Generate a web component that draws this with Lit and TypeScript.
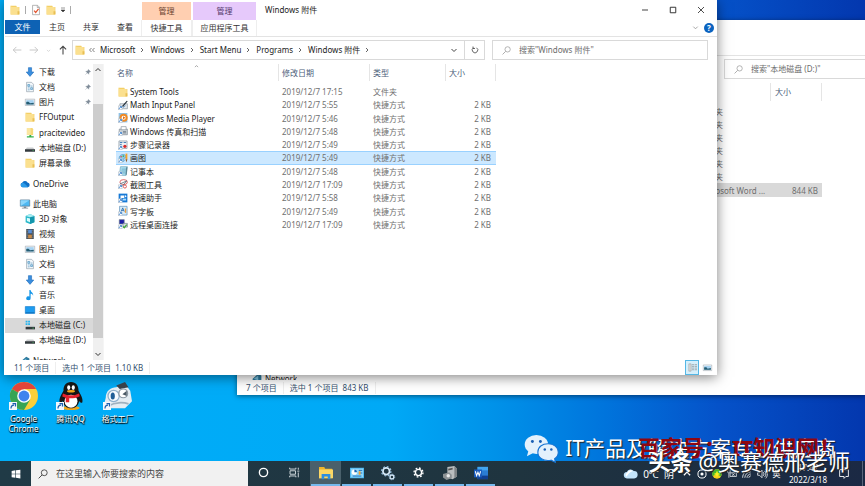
import { LitElement, html, svg, css, nothing, TemplateResult } from "lit";
import { customElement, property } from "lit/decorators.js";
import { classMap } from "lit/directives/class-map.js";

const shortcut = svg`<rect x="0.5" y="9.5" width="6" height="6" fill="#fff" stroke="#b9c4d0"/><path d="M2 14.5c0-2 1-3 3-3M3.400 10.500h2.300v2.300" stroke="#1668c4" fill="none" stroke-width="1.200"/>`;

const shapes: Record<string, unknown> = {
  folder: svg`<path d="M1 1h9l1 2h4v12H1z" fill="#f3cf66"/><path d="M2 3h12v12H1V1h1z" fill="#fbe08f"/><path d="M12 10h3v5h-3z" fill="#e8bf54"/>`,
  sharedFolder: svg`<path d="M3 0h9l1 2v9H3z" fill="#f7d877"/><path d="M3 0h6v11H3z" fill="#fbe6a0"/><path d="M7 11h3v2h4v2H3v-2h4z" fill="#35b04a"/>`,
  check: svg`<path d="M2.500.500h8l3 3v12h-11z" fill="#fff" stroke="#8a8a8a"/><path d="M10 1v3h3" stroke="#8a8a8a" fill="none"/><path d="M5 9l2.500 3L12 6" stroke="#e2532c" stroke-width="2" fill="none"/>`,
  download: svg`<path d="M5.500 1h5v7H14l-6 7-6-7h3.500z" fill="#3b8ede" stroke="#2470bd"/>`,
  doc: svg`<path d="M2.500.500h8l3 3v12h-11z" fill="#f4f8fb" stroke="#8d9aa6"/><path d="M4.500 4h3v3h-3zM9 6.500h3M4.500 9.500h3M9 9h3v3H9zM4.500 12.500h3" stroke="#4a8fbd" fill="#b8dcef"/>`,
  picture: svg`<path d="M.500 3.500h15v10H.500z" fill="#fff" stroke="#9aa4ad"/><path d="M2 5h12v7H2z" fill="#a7d3f2"/><path d="M2 8c3-1 5 0 6 2l6-1v3H2z" fill="#255d73"/>`,
  disk: svg`<path d="M3 7h10l3 4H0z" fill="#c9ccce"/><path d="M0 10h16v4H0z" fill="#333a3e"/><path d="M12 11.500h2v1h-2z" fill="#52e06b"/>`,
  diskC: svg`<path d="M1 1h3v3H1zM5 1h3v3H5zM1 5h3v3H1zM5 5h3v3H5z" fill="#26b4ee"/><path d="M3 9h11l2 2H1z" fill="#c9ccce"/><path d="M1 11h15v4H1z" fill="#333a3e"/><path d="M12 12.500h2v1h-2z" fill="#52e06b"/>`,
  cloud: svg`<path d="M4 13a3.600 3.600 0 0 1-.500-7A5 5 0 0 1 12 5.500 3.800 3.800 0 0 1 12.500 13z" fill="#0f6fc6"/><path d="M4 13a3.600 3.600 0 0 1 0-7c2 0 6 3 9 7z" fill="#2a9be8"/>`,
  pc: svg`<path d="M.500 1.500h15v10H.500z" fill="#4db8f2" stroke="#4d6f85"/><path d="M1 2h14L1 11z" fill="#8bd6fb"/><path d="M6 12h4v2h3v1H3v-1h3z" fill="#7c8c97"/>`,
  cube: svg`<path d="M8 0l7 3v10l-7 3-7-3V3z" fill="#27b7c9"/><path d="M8 5l7-2v10l-7 3z" fill="#1496ad"/><path d="M8 0l7 3-7 2-7-2z" fill="#a7edf2"/><path d="M3 6l5 1v6l-5-2z" fill="#d8fbfc"/>`,
  video: svg`<path d="M2 0h12v16H2z" fill="#3b4650"/><path d="M5 1h6v6H5z" fill="#5a8fd6"/><path d="M5 9h6v6H5z" fill="#c78b4b"/><path d="M3 2h1M3 5h1M3 8h1M3 11h1M3 14h1M12 2h1M12 5h1M12 8h1M12 11h1M12 14h1" stroke="#fff"/>`,
  music: svg`<path d="M7 0h2c0 4 5 4 4 9-1-3-3-3-4-3v7a3.500 3 0 1 1-2-2.500z" fill="#1696e8"/>`,
  desktop: svg`<path d="M.500 2.500h15v11H.500z" fill="#1e9cf0" stroke="#0f78c8"/><path d="M1 12h14v1H1z" fill="#0a5ea3"/>`,
  network: svg`<path d="M1 9l9-8 5 3v9l-6 2-8-3z" fill="#2d7a9e"/><path d="M3 9l7-5v8z" fill="#7cc0de"/>`,
  math: svg`<path d="M3 6h12v8H3z" fill="#e3e8ec" stroke="#7e8b96"/><path d="M6 10L14 1l1.500 1L8 11z" fill="#27323b"/><path d="M8 12l4-3" stroke="#2974bd"/>${shortcut}`,
  media: svg`<path d="M1 0h14v15H1z" fill="#8fc1e6"/><circle cx="9" cy="7.500" r="6.500" fill="#f08a24"/><circle cx="9" cy="7.500" r="3.300" fill="#fff"/><path d="M8 5l4 2.500L8 10z" fill="#e06d10"/>${shortcut}`,
  fax: svg`<path d="M2 5h13v9H2z" fill="#ccd3d9" stroke="#76828c"/><path d="M5 1h8v5H5z" fill="#fff" stroke="#7f8b95"/><path d="M8 9h5M8 11h5" stroke="#4d5c68"/>${shortcut}`,
  steps: svg`<path d="M1.500 1.500h13v12h-13z" fill="#eef2f5" stroke="#7c8a96"/><path d="M3 4h4M9 4h4M3 7h3" stroke="#3e7cb5" stroke-width="1.500"/><circle cx="11" cy="10" r="2.600" fill="#d92b2b"/>${shortcut}`,
  paint: svg`<path d="M2 10C1 4 6 1 11 3c3 2 2 5 0 5s-2 2-1 4-6 3-8-2z" fill="#8cc8ea" stroke="#4a92c0"/><circle cx="5" cy="6" r="1.300" fill="#e24a3b"/><circle cx="8.500" cy="5" r="1.300" fill="#45b04c"/><path d="M12 1h3v9h-3z" fill="#f4a22d"/><path d="M12 10h3l-1.500 5z" fill="#8a5a2b"/>${shortcut}`,
  notepad: svg`<path d="M4 1h11l-2 14H2z" fill="#a6dcee" stroke="#6aa2b8"/><path d="M6 5h7M5.500 8h7M5 11h7" stroke="#5d9db8"/><path d="M13 2h2l-1 12h-2z" fill="#5b8896"/>${shortcut}`,
  snip: svg`<ellipse cx="9" cy="5" rx="6" ry="4" fill="#fff" stroke="#d94a4a" stroke-width="1.300"/><path d="M3 8l11-5M6 12l8-9" stroke="#5a6b78" stroke-width="1.300"/><circle cx="11" cy="12" r="2.500" fill="none" stroke="#d94a4a" stroke-width="1.400"/>${shortcut}`,
  assist: svg`<path d="M1 1h14v14H1z" fill="#1679d6"/><path d="M4 4h6v4H6l-2 2z" fill="#fff"/><path d="M8 9h5v3H8z" fill="#a8dcff"/><path d="M11 3l3 2-3 2z" fill="#fff"/>${shortcut}`,
  wordpad: svg`<path d="M2.500.500h12v14h-12z" fill="#d9ecf8" stroke="#4b85b3"/><path d="M5 9l2.500-6L10 9M6 7h3" stroke="#2266a8" stroke-width="1.300" fill="none"/><path d="M11 4h2v7h-2z" fill="#ee9d3c"/>${shortcut}`,
  remote: svg`<path d="M2 1h8v7H2z" fill="#1c1ca8" stroke="#71808c"/><path d="M8 7h7v6H8z" fill="#d5dce2" stroke="#6c7a86"/><path d="M8 12l2 2 4-5" stroke="#41a93b" stroke-width="2" fill="none"/>${shortcut}`,
  pin: svg`<path d="M9 1l6 6-2 .500-3 3V14L2 6h3.500l3-3zM6 10l-5 5" fill="#7f8b98" stroke="#7f8b98"/>`,
  left: svg`<path d="M15 8H2M7 3L2 8l5 5" fill="none" stroke="currentColor" stroke-width="1.500"/>`,
  right: svg`<path d="M1 8h13M9 3l5 5-5 5" fill="none" stroke="currentColor" stroke-width="1.500"/>`,
  up: svg`<path d="M8 15V2M3 7l5-5 5 5" fill="none" stroke="currentColor" stroke-width="1.700"/>`,
  down: svg`<path d="M3 6l5 5 5-5" fill="none" stroke="currentColor" stroke-width="2"/>`,
  caretUp: svg`<path d="M3 10l5-5 5 5" fill="none" stroke="currentColor" stroke-width="2"/>`,
  next: svg`<path d="M6 4l4 4-4 4" fill="none" stroke="currentColor" stroke-width="1.800"/>`,
  back2: svg`<path d="M7 4L3 8l4 4M13 4L9 8l4 4" fill="none" stroke="currentColor" stroke-width="1.500"/>`,
  quick: svg`<path d="M4 4h8M4 8h8l-4 4z" fill="currentColor" stroke="currentColor"/>`,
  refresh: svg`<path d="M11 3.500A5.500 5.500 0 1 1 5 3.500M4 1v4h4" fill="none" stroke="currentColor" stroke-width="1.600"/>`,
  search: svg`<circle cx="10" cy="6" r="4.700" fill="none" stroke="currentColor" stroke-width="1.300"/><path d="M6.500 9.500L1 15" stroke="currentColor" stroke-width="1.400"/>`,
  min: svg`<path d="M2 8h12" stroke="currentColor" stroke-width="1.700"/>`,
  max: svg`<path d="M2.500 2.500h11v11h-11z" fill="none" stroke="currentColor" stroke-width="1.800"/>`,
  close: svg`<path d="M2 2l12 12M14 2L2 14" stroke="currentColor" stroke-width="1.600"/>`,
  details: svg`<path d="M1.500 1.500h4v13h-4z" fill="#ddd" stroke="#999"/><path d="M7 3h4M12 3h4M7 6h4M12 6h4M7 9h4M12 9h4M7 12h4M12 12h4" stroke="#777"/>`,
  start: svg`<path d="M1 3l6-1v5.500H1zM8 1.800L15 1v6.500H8zM1 8.500h6V14l-6-1zM8 8.500h7V15l-7-.900z" fill="#fff"/>`,
  cortana: svg`<circle cx="8" cy="8" r="6" fill="none" stroke="#fff" stroke-width="2"/>`,
  taskview: svg`<path d="M1 1v2h9V1M1 15v-2h9v2M1.500 5.500h8v5h-8zM13.500 1v3M13.500 8v7M12 6h3" fill="none" stroke="#dfe6ea" stroke-width="1.300"/>`,
  explorer: svg`<path d="M0 1h6l1 2h8v11H0z" fill="#f0b429"/><path d="M0 4h16v10H0z" fill="#fcd765"/><path d="M3 9h10v6h-3v-3H6v3H3z" fill="#2f8fe0"/>`,
  control: svg`<path d="M0 2h16v12H0z" fill="#48b4ee"/><path d="M1 3h14v10H1z" fill="#8fd6fa"/><circle cx="5" cy="7" r="3" fill="#fff"/><path d="M5 7V4a3 3 0 0 1 3 3z" fill="#1568b8"/><path d="M10 5h4M10 8h4M3 11.500h10" stroke="#1568b8"/><path d="M10 10v-4h2v4z" fill="#f4a22d"/>`,
  gears: svg`<circle cx="6" cy="6" r="3.800" fill="none" stroke="#d7e9f7" stroke-width="2"/><circle cx="6" cy="6" r="5.300" fill="none" stroke="#9cc4e4" stroke-width="1.500" stroke-dasharray="2 2.160"/><circle cx="12.500" cy="12.500" r="2.200" fill="none" stroke="#d7e9f7" stroke-width="1.500"/><circle cx="12.500" cy="12.500" r="3.200" fill="none" stroke="#9cc4e4" stroke-dasharray="1.300 1.200"/>`,
  gear: svg`<circle cx="8" cy="8" r="4.500" fill="none" stroke="#fff" stroke-width="2"/><circle cx="8" cy="8" r="6.500" fill="none" stroke="#fff" stroke-width="2" stroke-dasharray="2.550 2.550"/>`,
  factory: svg`<path d="M5 1l8-1 3 3v9l-5 3-6-2z" fill="#b9bdbf"/><path d="M13 0l3 3v9l-3 2z" fill="#7c8285"/><path d="M0 9l7-2 3 3v4l-6 2-4-3z" fill="#8b9194"/><circle cx="6" cy="11" r="2" fill="#e8eaeb"/><path d="M6 3l5-1v2L6 5z" fill="#555"/>`,
  word: svg`<path d="M4 1h12v14H4z" fill="#2b7cd3"/><path d="M4 1h12v4H4z" fill="#41a5ee"/><path d="M4 11h12v4H4z" fill="#103f91"/><path d="M0 4h9v9H0z" fill="#185abd"/><path d="M1.500 6l1.500 5 1.500-4L6 11l1.500-5" fill="none" stroke="#fff" stroke-width="1.200"/>`,
  weather: svg`<path d="M4 14a4 4 0 0 1-.500-8A5 5 0 0 1 12 5a4.500 4.500 0 0 1 .500 9z" fill="#c3e4fb"/><path d="M3 12a3 3 0 0 1 1-5 4.500 4.500 0 0 1 7-2c-4 1-6 4-8 7z" fill="#fff"/>`,
  record: svg`<circle cx="8" cy="8" r="6.500" fill="none" stroke="#fff" stroke-width="1.600"/><circle cx="8" cy="8" r="2.500" fill="#fff"/>`,
  guard: svg`<circle cx="8" cy="8" r="7.500" fill="#f5cf1b"/><path d="M8 .500A7.500 7.500 0 0 1 14 12L8 8 1 11A7.500 7.500 0 0 1 8 .500z" fill="#45b52f"/><path d="M8 4v8M4 8h8" stroke="#fff41f" stroke-width="2.400"/>`,
  power: svg`<path d="M5 6h10v6H5zM1 2v3c0 2 4 2 4 0V2M3 7v7M8 7l4 4M12 7l-4 4" fill="none" stroke="#fff" stroke-width="1.100"/>`,
  wifi: svg`<path d="M1 14C1 7 7 1 14 1M4.500 14c0-5 4.500-9.500 9.500-9.500M8 14c0-3 3-6 6-6M11 14c0-1.500 1.500-3 3-3" fill="none" stroke="#fff" stroke-width="1.300"/>`,
  sound: svg`<path d="M1 6h3l4-4v12l-4-4H1zM10 5c1.500 2 1.500 4 0 6M12 3c3 3 3 7 0 10M14 1c3.500 4 3.500 10 0 14" fill="none" stroke="#fff" stroke-width="1.200"/>`,
  notice: svg`<path d="M1 1h14v11h-4l-3 3v-3H1z" fill="none" stroke="#fff" stroke-width="1.400"/>`,
  chrome: svg`<circle cx="8" cy="8" r="8" fill="#f9cf3a"/><path d="M8 8L1.070 4A8 8 0 0 1 14.930 4H8z" fill="#e2453a"/><path d="M8 8L1.070 4A8 8 0 0 0 8 16l3.500-6z" fill="#37a455"/><circle cx="8" cy="8" r="3.900" fill="#fff"/><circle cx="8" cy="8" r="3.100" fill="#3f83ee"/>`,
  qq: svg`<ellipse cx="8" cy="14.800" rx="5" ry="1.200" fill="#f2a71b"/><path d="M8 0c3 0 4.300 2 4.300 5 1 2 2.700 4.300 2.200 6.500-.500 1-1.300 0-1.800-.700-.500 2.400-2 4.200-4.700 4.200S3.800 13.200 3.300 10.800c-.500.700-1.300 1.700-1.800.700C1 9.300 2.700 7 3.700 5 3.700 2 5 0 8 0z" fill="#151515"/><ellipse cx="8" cy="11" rx="3.700" ry="3.700" fill="#fff"/><ellipse cx="6.700" cy="3.200" rx=".900" ry="1.300" fill="#fff"/><ellipse cx="9.300" cy="3.200" rx=".900" ry="1.300" fill="#fff"/><ellipse cx="8" cy="5.300" rx="2.300" ry=".700" fill="#f2a71b"/><path d="M3.400 6.500c3 1.400 6.200 1.400 9.200 0l.400 1.600c-2 1-4 1.300-6 1.200v2.200H5V9l-2-.700z" fill="#e3222c"/>`,
  formatFactory: svg`<path d="M1 9c0-4 3-6 6-6l5-2 3 4 1 6-4 4H4l-4-2z" fill="#e4edf3"/><path d="M7 2l5-2 2 3-5 1z" fill="#39424a"/><circle cx="5.500" cy="8" r="3.200" fill="#f7fbff" stroke="#8fb0cc" stroke-width=".700"/><ellipse cx="5" cy="8" rx="1.200" ry="2" fill="#1f5d96"/><circle cx="11" cy="6.500" r="2.500" fill="#fff" stroke="#8a97a2" stroke-width=".700"/><path d="M10.500 7l2.500-2v3z" fill="#4a5964"/><path d="M3 13.500c3-2 8-2 11-1" fill="none" stroke="#9fb1bf"/>`,
  arrowBadge: svg`<path d="M0 0h16v16H0z" fill="#f4f8fc"/><path d="M4 13c0-5 2-7 6-7M7 3h6v6" fill="none" stroke="#1d5fae" stroke-width="2.500"/>`,
  wechat: svg`<g fill="#e3f1fc"><ellipse cx="17" cy="14" rx="16" ry="13"/><path d="M6 23l-2 7 8-4z"/></g><g fill="#e3f1fc" stroke="#1673d2" stroke-width="1.500"><path d="M33 13c8 0 14 5 14 11.500 0 4-2 7-5 9l1 5-6-3c-11 2-18-4-18-11S25 13 33 13z"/></g><g fill="#1a5fb4"><circle cx="11.500" cy="10" r="2"/><circle cx="22.500" cy="10" r="2"/><circle cx="28.500" cy="21" r="1.700"/><circle cx="37.500" cy="21" r="1.700"/></g>`,
};

@customElement("ui-icon")
export class UiIcon extends LitElement {
  static styles = css`
    :host { display: inline-flex; flex: none; width: 10px; height: 10px; }
    .glyph { width: 100%; height: 100%; overflow: visible; }
  `;
  @property() name = "";
  @property() box = "0 0 16 16";
  render() {
    return html`<svg class="glyph" viewBox=${this.box} aria-hidden="true">${shapes[this.name] ?? nothing}</svg>`;
  }
}

const icon = (name: string, cls = ""): TemplateResult => html`<ui-icon class=${cls} name=${name}></ui-icon>`;

interface NavItem { icon: string; label: string; pinned?: boolean; active?: boolean; }
const quickAccess: NavItem[] = [
  { icon: "download", label: "下载", pinned: true },
  { icon: "doc", label: "文档", pinned: true },
  { icon: "picture", label: "图片", pinned: true },
  { icon: "folder", label: "FFOutput" },
  { icon: "sharedFolder", label: "pracitevideo" },
  { icon: "disk", label: "本地磁盘 (D:)" },
  { icon: "folder", label: "屏幕录像" },
];
const thisPc: NavItem[] = [
  { icon: "cube", label: "3D 对象" },
  { icon: "video", label: "视频" },
  { icon: "picture", label: "图片" },
  { icon: "doc", label: "文档" },
  { icon: "download", label: "下载" },
  { icon: "music", label: "音乐" },
  { icon: "desktop", label: "桌面" },
  { icon: "diskC", label: "本地磁盘 (C:)", active: true },
  { icon: "disk", label: "本地磁盘 (D:)" },
];
const files: [string, string, string][] = [
  ["folder", "System Tools", "17:15"],
  ["math", "Math Input Panel", "5:55"],
  ["media", "Windows Media Player", "5:46"],
  ["fax", "Windows 传真和扫描", "5:48"],
  ["steps", "步骤记录器", "5:49"],
  ["paint", "画图", "5:49"],
  ["notepad", "记事本", "5:48"],
  ["snip", "截图工具", "17:09"],
  ["assist", "快速助手", "5:58"],
  ["wordpad", "写字板", "5:49"],
  ["remote", "远程桌面连接", "17:09"],
];

const base = css`
  * { box-sizing: border-box; }
  button, input { font: inherit; color: inherit; background: none; border: 0; padding: 0; margin: 0; min-width: 0; outline: 0; }
  button { display: flex; align-items: center; justify-content: center; }
  a { color: inherit; text-decoration: none; }
  .search { display: flex; align-items: center; gap: 8px; height: 20px; padding: 0 9px; border: 1px solid #d9d9d9; color: #999; background: #fff; }
  .search ui-icon { width: 9px; height: 9px; }
  .search input { flex: 1; }
  .search input::placeholder { color: #6d6d6d; opacity: 1; }
  .status { display: flex; align-items: center; height: 15px; color: #33506e; }
  .status span { padding-right: 6px; margin-right: 6px; border-right: 1px solid #eee; white-space: pre; }
`;

@customElement("explorer-window")
export class ExplorerWindow extends LitElement {
  static styles = [base, css`
    :host { display: flex; flex-direction: column; background: #fff; color: #222; box-shadow: 0 2px 12px rgba(0, 0, 0, 0.5); padding-left: 1px; }
    .title { display: flex; height: 20px; align-items: center; }
    .quick { display: flex; align-items: center; gap: 5px; width: 137px; padding-left: 5px; color: #333; }
    .quick i { width: 1px; height: 8px; background: #aaa; }
    .quick .small { width: 8px; height: 8px; margin: 0 -2px; }
    .ctx { align-self: stretch; margin-top: 2px; display: flex; align-items: center; justify-content: center; width: 49px; margin-right: 2px; background: #ffcfb1; color: #6b4330; }
    .ctx.app { width: 63px; background: #e6c9fb; color: #553a6b; margin-right: 9px; }
    .name { flex: 1; }
    .controls { display: flex; margin-right: 2px; }
    .controls button { width: 28px; height: 20px; }
    .controls ui-icon { width: 8px; height: 8px; }
    .tabs { display: flex; height: 17px; border-bottom: 1px solid #e3e3e3; }
    .tabs button { width: 34px; height: 14px; color: #333; white-space: nowrap; }
    .tabs .file { width: 35px; background: #0e62b4; color: #fff; }
    .tabs .tool { width: 49px; margin-right: 2px; height: 16px; box-shadow: 1px 0 #eee, -1px 0 #eee; }
    .tabs .wide { width: 63px; }
    .tabs .spacer { flex: 1; }
    .tabs .fold { width: 14px; color: #999; }
    .tabs .fold ui-icon { width: 7px; height: 7px; }
    .tabs .help { width: 10px; height: 10px; margin: 3px 3px 0 2px; border-radius: 50%; background: #0b63c0; color: #fff; font-weight: 700; }
    .bar { display: flex; align-items: center; padding: 3px 9px 2px 7px; }
    .history { display: flex; align-items: center; gap: 7px; width: 60px; color: #444; }
    .history .off { color: #c4c4c4; }
    .history .tiny { width: 5px; height: 5px; }
    .address { display: flex; align-items: center; flex: 66; min-width: 0; height: 20px; border: 1px solid #d9d9d9; padding-left: 2px; }
    .crumbs { flex: 1; display: flex; align-items: center; min-width: 0; overflow: hidden; white-space: nowrap; }
    .crumbs ui-icon { width: 8px; height: 8px; margin: 0 4px 0 3px; color: #555; }
    .address > button { width: 20px; height: 18px; color: #444; }
    .address > button + button { border-left: 1px solid #d9d9d9; }
    .address > button ui-icon { width: 8px; height: 8px; }
    .bar .search { flex: 0 1 216px; margin-left: 7px; }
    .body { flex: 1; display: flex; min-height: 0; padding-top: 2px; }
    .nav { width: 88px; overflow: hidden; white-space: nowrap; flex: none; }
    .group { display: grid; grid-auto-rows: 1fr; min-height: 107px; margin-bottom: 5px; }
    .group.pc { min-height: 152px; }
    .group.one { min-height: 15px; }
    .nav a { display: flex; align-items: center; gap: 4px; padding: 0 2px 0 20px; }
    .nav a.root { padding-left: 15px; gap: 3px; }
    .nav a.active { background: #d9d9d9; }
    .nav .pin { width: 6px; height: 6px; margin-left: auto; }
    .scroll { width: 10px; flex: none; background: #f0f0f0; display: flex; flex-direction: column; align-items: center; color: #333; padding: 2px 0; }
    .scroll ui-icon { width: 8px; height: 8px; }
    .thumb { width: 100%; flex: 1; margin: 30px 0 12px; background: #cdcdcd; }
    .list { flex: 1; min-width: 0; padding-left: 12px; border-left: 1px solid #f5f5f5; }
    table { width: 380px; height: 167px; border-collapse: separate; border-spacing: 0; table-layout: fixed; white-space: nowrap; }
    th, td { padding: 0; text-align: left; font-weight: 400; }
    th { height: 21px; vertical-align: top; color: #4c607a; position: relative; }
    th div { height: 17px; border-right: 1px solid #e5e5e5; display: flex; align-items: center; padding-left: 3px; }
    th:first-child div { padding-left: 1px; }
    .sort { position: absolute; top: 0; left: 47%; width: 7px; height: 5px; color: #777; }
    .c1 { width: 163px; } .c2 { width: 91px; } .c3 { width: 76px; } .c4 { width: 50px; }
    td { color: #6f6f6f; padding-left: 3px; line-height: 11px; }
    td:first-child { color: #222; padding-left: 2px; }
    td:last-child { text-align: right; padding-right: 5px; }
    .cell { display: flex; align-items: center; gap: 2px; }
    .picked td { background: #cce8ff; box-shadow: inset 0 1px #99d1ff, inset 0 -1px #99d1ff; }
    .foot { display: flex; padding: 0 3px 0 9px; align-items: center; justify-content: space-between; }
    .views { display: flex; gap: 1px; }
    .views button { width: 14px; height: 15px; }
    .views .on { background: #d5effb; border: 1px solid #54b7e6; }
    .views ui-icon { width: 9px; height: 9px; }
  `];

  private navLink(n: NavItem, root = false) {
    return html`<a href="#" class=${classMap({ root, active: !!n.active })}>${icon(n.icon)}<span>${n.label}</span>${n.pinned ? icon("pin", "pin") : nothing}</a>`;
  }

  render() {
    return html`
      <header class="title">
        <div class="quick">${icon("folder")}<i></i>${icon("check")}${icon("folder")}${icon("quick", "small")}<i></i></div>
        <div class="ctx">管理</div><div class="ctx app">管理</div>
        <div class="name">Windows 附件</div>
        <div class="controls">
          <button aria-label="最小化">${icon("min")}</button>
          <button aria-label="最大化">${icon("max")}</button>
          <button aria-label="关闭">${icon("close")}</button>
        </div>
      </header>
      <div class="tabs">
        <button class="file">文件</button><button>主页</button><button>共享</button><button>查看</button>
        <button class="tool">快捷工具</button><button class="tool wide">应用程序工具</button>
        <div class="spacer"></div>
        <button class="fold" aria-label="折叠功能区">${icon("down")}</button><button class="help">?</button>
      </div>
      <div class="bar">
        <div class="history">
          ${icon("left", "off")}${icon("right", "off")}${icon("down", "tiny off")}${icon("up")}
        </div>
        <div class="address">
          ${icon("folder")}
          <nav class="crumbs">
            ${icon("back2")}
            ${["Microsoft", "Windows", "Start Menu", "Programs", "Windows 附件"].map((c) => html`<a href="#">${c}</a>${icon("next")}`)}
          </nav>
          <button aria-label="历史">${icon("down")}</button><button aria-label="刷新">${icon("refresh")}</button>
        </div>
        <label class="search">${icon("search")}<input aria-label="搜索" placeholder='搜索"Windows 附件"' /></label>
      </div>
      <div class="body">
        <nav class="nav">
          <div class="group">${quickAccess.map((n) => this.navLink(n))}</div>
          <div class="group one">${this.navLink({ icon: "cloud", label: "OneDrive" }, true)}</div>
          <div class="group pc">${this.navLink({ icon: "pc", label: "此电脑" }, true)}${thisPc.map((n) => this.navLink(n))}</div>
          <div class="group one">${this.navLink({ icon: "network", label: "Network" }, true)}</div>
        </nav>
        <div class="scroll">${icon("caretUp")}<div class="thumb"></div>${icon("down")}</div>
        <div class="list">
          <table>
            <thead><tr>
              <th class="c1"><div>名称</div>${icon("caretUp", "sort")}</th>
              <th class="c2"><div>修改日期</div></th><th class="c3"><div>类型</div></th><th class="c4"><div>大小</div></th>
            </tr></thead>
            <tbody>
              ${files.map(([ic, name, time]) => html`<tr class=${classMap({ picked: ic === "paint" })}>
                <td><div class="cell">${icon(ic)}<span>${name}</span></div></td>
                <td>2019/12/7 ${time}</td>
                <td>${ic === "folder" ? "文件夹" : "快捷方式"}</td>
                <td>${ic === "folder" ? "" : "2 KB"}</td>
              </tr>`)}
            </tbody>
          </table>
        </div>
      </div>
      <footer class="foot">
        <div class="status"><span>11 个项目</span><span>选中 1 个项目  1.10 KB</span></div>
        <div class="views">
          <button class="on" aria-label="详细信息">${icon("details")}</button><button aria-label="大图标">${icon("picture")}</button>
        </div>
      </footer>`;
  }
}

@customElement("disk-window")
export class DiskWindow extends LitElement {
  static styles = [base, css`
    :host { display: flex; flex-direction: column; background: #fff; box-shadow: 0 1px 5px rgba(0, 0, 0, 0.5); color: #6f6f6f; overflow: hidden; }
    .ribbon { height: 36px; border-bottom: 1px solid #e3e3e3; }
    .bar { display: flex; justify-content: flex-end; padding: 3px 0 4px; }
    .bar .search { width: 141px; border-right: 0; }
    .content { flex: 1; display: flex; flex-direction: column; align-items: flex-end; min-height: 0; overflow: hidden; }
    table { width: 161px; margin-right: 43px; border-spacing: 0; table-layout: fixed; white-space: nowrap; }
    th, td { padding: 0; font-weight: 400; text-align: left; }
    th { height: 22px; vertical-align: top; color: #4c607a; }
    th div { height: 18px; border-right: 1px solid #e5e5e5; padding-left: 4px; display: flex; align-items: center; }
    .kind { width: 110px; }
    td { line-height: 11px; height: 13px; padding-left: 38px; }
    .word td { background: #d9d9d9; height: 14px; }
    .word td:last-child { padding: 0 4px 0 0; text-align: right; }
    .side { margin-top: auto; align-self: flex-start; display: flex; align-items: flex-start; gap: 3px; height: 7px; overflow: hidden; padding-left: 15px; color: #222; }
    .status { padding-left: 9px; }
  `];
  render() {
    return html`
      <div class="ribbon"></div>
      <div class="bar"><label class="search">${icon("search")}<input aria-label="搜索" placeholder='搜索"本地磁盘 (D:)"' /></label></div>
      <div class="content">
        <table>
          <thead><tr><th class="kind"><div></div></th><th><div>大小</div></th></tr></thead>
          <tbody>
            ${[1, 2, 3, 4, 5, 6].map(() => html`<tr><td>文件夹</td><td></td></tr>`)}
            <tr class="word"><td>Microsoft Word ...</td><td>844 KB</td></tr>
          </tbody>
        </table>
        <div class="side">${icon("network")}<span>Network</span></div>
      </div>
      <div class="status"><span>7 个项目</span><span>选中 1 个项目  843 KB</span></div>`;
  }
}

@customElement("app-root")
export class AppRoot extends LitElement {
  static styles = [base, css`
    :host { display: block; font: 8px/12px "Noto Sans", "Noto Sans CJK SC", sans-serif; }
    .desktop { position: relative; min-height: 100vh; overflow: hidden; display: flex; flex-direction: column; justify-content: flex-end;
      background: linear-gradient(90deg, #00aef8 0%, #00a9f6 45%, #0090e8 58%, #0074dc 70%, #0552c9 83%, #0337ae 100%); }
    disk-window { position: absolute; left: 237px; right: 0; top: 20px; bottom: 91px; }
    explorer-window { position: absolute; left: 4px; right: 148px; top: 0; bottom: 111px; }
    .icons { display: flex; padding: 0 0 27px; }
    .icons button { flex-direction: column; justify-content: flex-start; width: 47px; color: #fff; line-height: 10px; text-shadow: 0 1px 1px #000, 1px 1px 1px #000; }
    .pic { position: relative; display: flex; margin-bottom: 4px; }
    .pic ui-icon { width: 28px; height: 28px; }
    .pic .badge { position: absolute; left: -1px; bottom: 0; width: 8px; height: 8px; }
    .taskbar { display: flex; height: 25px; color: #fff; background: linear-gradient(90deg, #203a46, #1f343f 60%, #1b2944); }
    .start { width: 31px; }
    .taskbar .find { display: flex; align-items: center; gap: 8px; width: 217px; padding-left: 7px; background: #f1f1f1; color: #333; font-size: 9px; }
    .find input { flex: 1; }
    .find input::placeholder { color: #444; opacity: 1; }
    .app { width: 31px; border-bottom: 2px solid transparent; background-clip: padding-box; }
    .app.open { border-image: linear-gradient(90deg, transparent 10%, #76b9ed 10%, #76b9ed 90%, transparent 90%) 2; border-width: 0 0 2px; border-style: solid; }
    .app.here { background: #4a606b; }
    .app ui-icon { width: 14px; height: 14px; }
    .app .slim { width: 11px; height: 11px; }
    .tray { margin-left: auto; display: flex; align-items: center; }
    .weather { gap: 6px; margin-right: 5px; font-size: 10px; white-space: pre; }
    .weather ui-icon { width: 13px; height: 13px; }
    .tray .t { width: 15px; }
    .clock { display: flex; flex-direction: column; align-items: center; width: 48px; line-height: 12px; }
    .notice { width: 24px; }
    .edge { align-self: stretch; width: 3px; margin-left: 6px; border-left: 1px solid #58657a; }
    .mark { position: absolute; white-space: nowrap; color: #fff; text-shadow: 1px 1px 1px #222; }
    .wechat { right: 29px; bottom: 22px; display: flex; align-items: center; gap: 6px; font-size: 21px; line-height: 32px; }
    .wechat ui-icon { width: 35px; height: 29px; }
    .site { right: 24px; bottom: 28px; color: #8f0610; font-size: 22px; line-height: 22px; font-weight: 700; text-shadow: none; }
    .author { right: 15px; bottom: 12px; font-size: 22px; line-height: 26px; }
  `];

  private shortcutIcon(name: string, label: TemplateResult) {
    return html`<button><span class="pic">${icon(name)}${icon("arrowBadge", "badge")}</span><span>${label}</span></button>`;
  }

  render() {
    return html`
      <main class="desktop">
        <disk-window></disk-window>
        <explorer-window></explorer-window>
        <div class="icons">
          ${this.shortcutIcon("chrome", html`Google<br />Chrome`)}
          ${this.shortcutIcon("qq", html`腾讯QQ`)}
          ${this.shortcutIcon("formatFactory", html`格式工厂`)}
        </div>
        <footer class="taskbar">
          <button class="start" aria-label="开始">${icon("start")}</button>
          <label class="find">${icon("search")}<input aria-label="搜索" placeholder="在这里输入你要搜索的内容" /></label>
          <button class="app" aria-label="Cortana">${icon("cortana", "slim")}</button>
          <button class="app" aria-label="任务视图">${icon("taskview", "slim")}</button>
          <button class="app open here" aria-label="文件资源管理器">${icon("explorer")}</button>
          <button class="app open" aria-label="控制面板">${icon("control")}</button>
          <button class="app open" aria-label="服务">${icon("gears")}</button>
          <button class="app open" aria-label="设置">${icon("gear", "slim")}</button>
          <button class="app open" aria-label="格式工厂">${icon("factory")}</button>
          <button class="app open" aria-label="Word">${icon("word")}</button>
          <div class="tray">
            <button class="weather">${icon("weather")}0℃  阴</button>
            ${["caretUp", "record", "guard", "power", "wifi", "sound"].map((n) => html`<button class="t" aria-label=${n}>${icon(n)}</button>`)}
            <button class="t">英</button>
            <div class="clock"><span>17:42</span><span>2022/3/18</span></div>
            <button class="notice" aria-label="通知">${icon("notice")}</button>
            <span class="edge"></span>
          </div>
        </footer>
        <div class="mark wechat"><ui-icon name="wechat" box="0 0 48 39"></ui-icon>IT产品及解决方案专业供应商</div>
        <div class="mark site">百家号： IT知识网！</div>
        <div class="mark author"><b>头条</b> @奥赛德邢老师</div>
      </main>`;
  }
}
